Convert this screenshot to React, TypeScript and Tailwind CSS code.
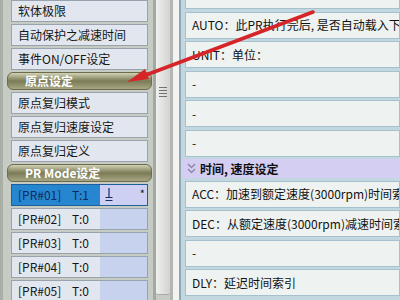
import React from 'react';

const font = { fontFamily: '"Noto Sans CJK SC", "Noto Sans", sans-serif' };

const MenuButton: React.FC<{ label: string }> = ({ label }) => (
  <div className="h-[22px] shrink-0 ml-[8px] mr-[5px] flex items-center pl-[6px] bg-[#e2e7ef] border border-[#98a3ad] text-[12px] text-[#161616] leading-none">
    {label}
  </div>
);

const GroupHeader: React.FC<{ label: string }> = ({ label }) => (
  <div className="h-[18px] shrink-0 ml-[4px] mr-[1px] flex items-center pl-[17px] rounded-[6px] border border-[#6c6c4c] bg-gradient-to-b from-[#d2d2b6] via-[#7b7b57] to-[#a6a684] text-[12px] font-bold text-white leading-none">
    {label}
  </div>
);

const PrRow: React.FC<{ no: string; t: string; selected?: boolean }> = ({ no, t, selected }) => (
  <div
    className={`h-[22px] shrink-0 ml-[8px] mr-[5px] flex border text-[12px] leading-none ${
      selected ? 'border-[#1d5f9a]' : 'border-[#98a3ad]'
    }`}
  >
    <div
      className={`w-[88px] flex items-center pl-[6px] ${
        selected ? 'bg-[#2686d0] text-[#0f2b5a]' : 'bg-[#e2e7ef] text-[#161616]'
      }`}
    >
      <span className="w-[54px]">[PR#{no}]</span>
      <span>T:{t}</span>
    </div>
    <div className={`flex-1 relative ${selected ? 'bg-[#cdd0f3]' : 'bg-[#c6d2ee]'}`}>
      {selected && (
        <>
          <svg className="absolute left-[5px] top-[3px]" width="8" height="14" viewBox="0 0 8 14">
            <path d="M4 0V9M0.5 9.5H7.5M0.5 12.5H7.5" stroke="#1b2d60" strokeWidth="1.2" fill="none" />
          </svg>
          <span className="absolute right-[2px] top-[3px] text-[11px] text-[#1b1b1b]">*</span>
        </>
      )}
    </div>
  </div>
);

const Cell: React.FC<{ children: React.ReactNode; className?: string }> = ({ children, className }) => (
  <div
    className={`h-[27px] shrink-0 flex items-center pl-[6px] bg-[#eef3f1] border border-[#a6c1ce] text-[12px] text-[#121212] whitespace-nowrap overflow-hidden leading-none ${
      className ?? ''
    }`}
  >
    {children}
  </div>
);

const App: React.FC = () => {
  return (
    <div className="w-[400px] h-[300px] overflow-hidden flex relative bg-[#c6cbc3]" style={font}>
      {/* left menu */}
      <div className="w-[153px] h-full shrink-0 flex flex-col gap-[2px] border-l-[3px] border-[#a9aea6] bg-[#c6cbc3]">
        <MenuButton label="软体极限" />
        <MenuButton label="自动保护之减速时间" />
        <MenuButton label="事件ON/OFF设定" />
        <GroupHeader label="原点设定" />
        <MenuButton label="原点复归模式" />
        <MenuButton label="原点复归速度设定" />
        <MenuButton label="原点复归定义" />
        <GroupHeader label="PR Mode设定" />
        <PrRow no="01" t="1" selected />
        <PrRow no="02" t="0" />
        <PrRow no="03" t="0" />
        <PrRow no="04" t="0" />
        <PrRow no="05" t="0" />
      </div>

      {/* splitter */}
      <div className="w-[28px] h-full shrink-0 flex">
        <div className="w-[3px] bg-[#a3a8a1]" />
        <div className="w-[14px] h-[295px] flex items-start justify-center pt-[86px] rounded-b-[3px] border-b border-[#a8aaa8] bg-gradient-to-r from-[#f0f0ee] to-[#d2d3d0]">
          <svg width="8" height="11" viewBox="0 0 8 11">
            <path d="M0 1.5H8M0 4.5H8M0 7.5H8M0 10.5H8" stroke="#6f736f" strokeWidth="1" />
          </svg>
        </div>
        <div className="w-[3px] bg-[#b3b6b2]" />
        <div className="w-[6px] bg-[#f3f4f2]" />
        <div className="w-[2px] bg-[#8fa8b4]" />
      </div>

      {/* right detail list */}
      <div className="flex-1 h-full overflow-hidden bg-[#c3d7e0] pl-[4px]">
        <div className="flex flex-col gap-[2.5px] mt-[-18px]">
          <Cell className="pb-[6px]">TYPE：运动模式设定(位置/速度)</Cell>
          <Cell>AUTO：此PR执行完后, 是否自动载入下一个PR</Cell>
          <Cell>UNIT：单位：</Cell>
          <Cell>-</Cell>
          <Cell>-</Cell>
          <Cell>-</Cell>
          <div className="h-[19px] shrink-0 -ml-[3px] flex items-center bg-[#d5cef3] text-[12px] font-bold text-[#101010] leading-none">
            <svg className="ml-[5px] mr-[4px]" width="9" height="11" viewBox="0 0 9 11">
              <path d="M1 1L4.5 4.5L8 1M1 6L4.5 9.5L8 6" stroke="#8a86a8" strokeWidth="1.4" fill="none" />
            </svg>
            时间, 速度设定
          </div>
          <Cell>ACC：加速到额定速度(3000rpm)时间索引</Cell>
          <Cell>DEC：从额定速度(3000rpm)减速时间索引</Cell>
          <Cell>-</Cell>
          <Cell>DLY：延迟时间索引</Cell>
        </div>
      </div>

      {/* red annotation arrow */}
      <svg className="absolute left-0 top-0 pointer-events-none" width="400" height="300" viewBox="0 0 400 300">
        <line x1="313" y1="12" x2="146" y2="75" stroke="#d62528" strokeWidth="3.5" strokeLinecap="round" />
        <polygon points="127,82 149,79 145,69" fill="#d62528" />
      </svg>
    </div>
  );
};

export default App;
